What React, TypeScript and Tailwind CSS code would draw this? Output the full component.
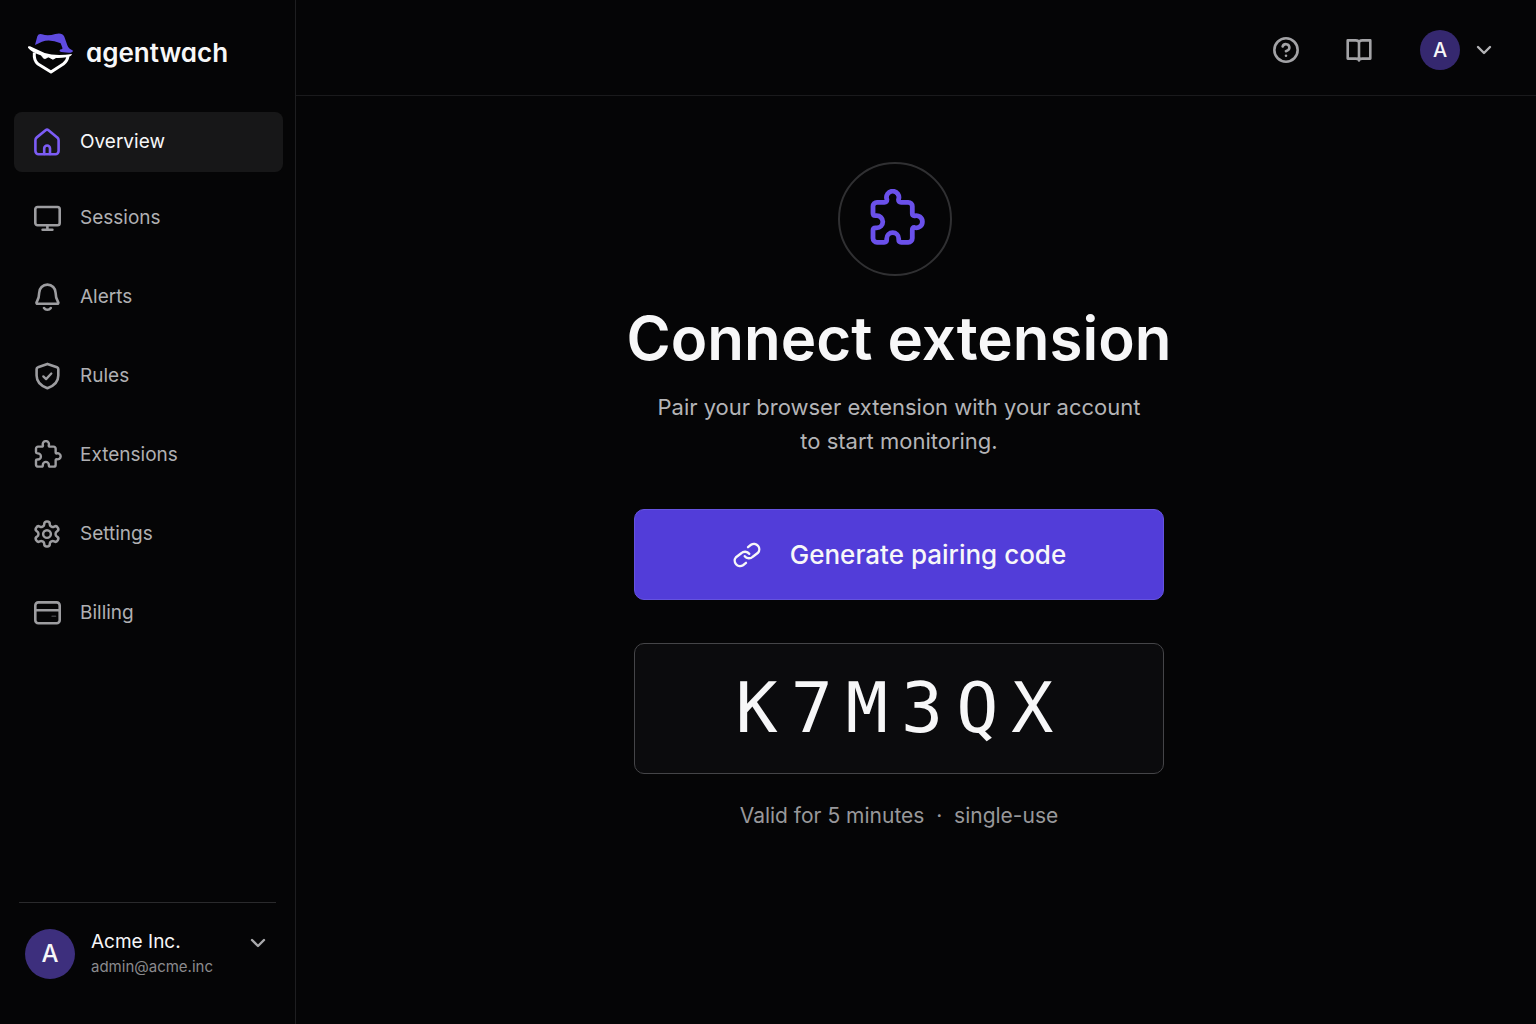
import type { ReactNode } from "react";
import { ChevronDown, CircleQuestionMark } from "lucide-react";

function Stroke({ children }: { children: ReactNode }) {
  return (
    <svg
      className="size-[30px] shrink-0"
      viewBox="0 0 30 30"
      fill="none"
      stroke="currentColor"
      strokeWidth={2.6}
      strokeLinecap="round"
      strokeLinejoin="round"
      aria-hidden="true"
    >
      {children}
    </svg>
  );
}

function PuzzleIcon({ className }: { className?: string }) {
  return (
    <svg
      className={className}
      viewBox="-3 2 60 60"
      fill="none"
      stroke="currentColor"
      strokeWidth={4.8}
      strokeLinecap="round"
      strokeLinejoin="round"
      aria-hidden="true"
    >
      <path d="M9 15.3H16.4Q19 15.3 18.9 12.6A6.2 6.2 0 1 1 30.5 12.6Q30.4 15.3 33 15.3H40.3a4 4 0 0 1 4 4V26.4Q44.3 29 46.4 28.9A6.1 6.1 0 1 1 46.4 40.5Q44.3 40.4 44.3 43V51.3a4 4 0 0 1-4 4H33.2Q30.7 55.3 30.7 52.6V51.7a6 6 0 0 0-12 0V52.6Q18.7 55.3 16.2 55.3H9a4 4 0 0 1-4-4V43.2Q5 40.9 7.6 40.9H8.7a6.1 6.1 0 0 0 0-12.2H7.6Q5 28.7 5 26.2V19.3a4 4 0 0 1 4-4z" />
    </svg>
  );
}

function LinkIcon() {
  return (
    <svg
      className="size-[30px] shrink-0"
      viewBox="0 0 24 24"
      fill="none"
      stroke="currentColor"
      strokeWidth={1.9}
      strokeLinecap="round"
      strokeLinejoin="round"
      aria-hidden="true"
    >
      <path d="M10.2 13a4.3 4.3 0 0 0 6.4.4l4.2-3.2a4.3 4.3 0 0 0-5.6-6.4l-2.4 1.9" />
      <path d="M13.8 11a4.3 4.3 0 0 0-6.4-.4l-4.2 3.2a4.3 4.3 0 0 0 5.6 6.4l2.4-1.9" />
    </svg>
  );
}

function LogoMark() {
  return (
    <svg className="h-[54px] w-[60px]" viewBox="0 0 180 162" aria-hidden="true">
      <path
        d="M39 57 46 31Q50 21 60 25 78 31 100 24 120 18 127 32L136 58Q140 69 153 74 152 80 140 80L118 78Q108 76 116 70 124 70 120 62L116 52Q84 38 60 47 48 53 39 57Z"
        fill="#5f4be0"
      />
      <path d="M18 65Q16 59 24 61L68 81Q100 91 150 84 149 91 134 94 96 99 62 90 28 79 18 65Z" fill="#fff" />
      <path d="M37 80Q35 104 48 114L87 138 124 114Q136 105 138 90" fill="none" stroke="#fff" strokeWidth="9" strokeLinejoin="round" />
      <path d="M58 88 63 95Q68 101 75 95 80 91 84 95 93 104 100 96L108 92Z" fill="#fff" stroke="#fff" strokeWidth="2" />
    </svg>
  );
}

const HOME_ICON = (
  <Stroke>
    <path d="M3.4 13.2a3.6 3.6 0 0 1 1.4-2.8L13.6 3.3a2.3 2.3 0 0 1 2.9 0l8.7 7.1a3.6 3.6 0 0 1 1.4 2.8V24a3.2 3.2 0 0 1-3.2 3.2H6.6A3.2 3.2 0 0 1 3.4 24z" />
    <path d="M12.2 27v-5.6a2.9 2.9 0 0 1 5.8 0V27" />
  </Stroke>
);

const NAV = [
  {
    name: "Sessions",
    icon: (
      <Stroke>
        <rect x="3.3" y="4" width="24.4" height="18.2" rx="2.2" />
        <path d="M15.4 22.4v4.4M10.6 26.8h9.8" />
      </Stroke>
    ),
  },
  {
    name: "Alerts",
    icon: (
      <Stroke>
        <path d="M15.4 2.6a8.2 8.2 0 0 0-8.2 8.2c0 5.2-1.2 7-2.5 9.2-.6 1-.1 1.8 1 1.8h19.4c1.1 0 1.6-.8 1-1.8-1.3-2.2-2.5-4-2.5-9.2a8.2 8.2 0 0 0-8.2-8.2z" />
        <path d="M12 26a4.2 4.2 0 0 0 6.8 0" />
      </Stroke>
    ),
  },
  {
    name: "Rules",
    icon: (
      <Stroke>
        <path d="M15.4 2.9 25 6.2a2 2 0 0 1 1.3 1.9v6.4c0 6-4 10.3-10.9 12.7C8.6 24.8 4.6 20.5 4.6 14.5V8.1A2 2 0 0 1 6 6.2z" />
        <path d="m11.3 15.4 2.8 2.7 5.2-5.6" strokeWidth={2.3} />
      </Stroke>
    ),
  },
  { name: "Extensions", icon: <PuzzleIcon className="size-[30px] shrink-0" /> },
  {
    name: "Settings",
    icon: (
      <svg
        className="size-[30px] shrink-0"
        viewBox="0 0 24 24"
        fill="none"
        stroke="currentColor"
        strokeWidth={2}
        strokeLinecap="round"
        strokeLinejoin="round"
        aria-hidden="true"
      >
        <path d="M12.22 2h-.44a2 2 0 0 0-2 2v.18a2 2 0 0 1-1 1.73l-.43.25a2 2 0 0 1-2 0l-.15-.08a2 2 0 0 0-2.73.73l-.22.38a2 2 0 0 0 .73 2.73l.15.1a2 2 0 0 1 1 1.72v.51a2 2 0 0 1-1 1.74l-.15.09a2 2 0 0 0-.73 2.73l.22.38a2 2 0 0 0 2.73.73l.15-.08a2 2 0 0 1 2 0l.43.25a2 2 0 0 1 1 1.73V20a2 2 0 0 0 2 2h.44a2 2 0 0 0 2-2v-.18a2 2 0 0 1 1-1.73l.43-.25a2 2 0 0 1 2 0l.15.08a2 2 0 0 0 2.73-.73l.22-.39a2 2 0 0 0-.73-2.73l-.15-.08a2 2 0 0 1-1-1.74v-.5a2 2 0 0 1 1-1.74l.15-.09a2 2 0 0 0 .73-2.73l-.22-.38a2 2 0 0 0-2.73-.73l-.15.08a2 2 0 0 1-2 0l-.43-.25a2 2 0 0 1-1-1.73V4a2 2 0 0 0-2-2z" />
        <circle cx="12" cy="12" r="3.1" />
      </svg>
    ),
  },
  {
    name: "Billing",
    icon: (
      <Stroke>
        <rect x="3.3" y="4.4" width="24.4" height="20.8" rx="3" />
        <path d="M3.6 12.2h24" />
        <path d="M20 18.3h3.6" strokeWidth={1.4} stroke="#3f3f42" />
      </Stroke>
    ),
  },
];

function Sidebar() {
  return (
    <aside className="flex w-[296px] shrink-0 flex-col border-r border-[#1e1e20] pt-[26px]">
      <a href="#" className="flex items-center gap-1 pl-[22px]">
        <LogoMark />
        <span className="text-[26px] leading-8 font-semibold [font-feature-settings:'cv11']">agentwach</span>
      </a>

      <nav className="mt-8 flex flex-col gap-4 pr-3 pl-[14px] text-[19px]">
        <a href="#" aria-current="page" className="flex h-[60px] items-center gap-[18px] rounded-lg bg-[#171718] pl-[18px]">
          <span className="text-[#7c5cf5]">{HOME_ICON}</span>
          Overview
        </a>
        <ul className="flex flex-col gap-[19px] text-[#b0b0b3]">
          {NAV.map((item) => (
            <li key={item.name}>
              <a href="#" className="flex h-[60px] items-center gap-[18px] rounded-lg pl-[18px]">
                <span className="text-[#9d9da0]">{item.icon}</span>
                {item.name}
              </a>
            </li>
          ))}
        </ul>
      </nav>

      <div className="mx-[19px] mt-auto border-t border-[#2a2a2c] pt-[26px] pb-[45px]">
        <button type="button" className="flex w-full items-start pl-[6px] text-left">
          <span className="flex size-[50px] items-center justify-center rounded-full bg-[#3d2f7d] text-2xl font-medium">A</span>
          <span className="ml-4 flex-1">
            <span className="block text-[19px] leading-[26px]">Acme Inc.</span>
            <span className="block text-[15px] leading-6 text-[#8b8b8e]">admin@acme.inc</span>
          </span>
          <ChevronDown className="mt-[2px] mr-[6px] size-6 text-[#a9a9ac]" strokeWidth={2.4} />
        </button>
      </div>
    </aside>
  );
}

function Topbar() {
  return (
    <header className="flex h-24 items-center justify-end border-b border-[#1a1a1c] pr-10 pb-[2px] pt-[6px]">
      <button type="button" aria-label="Help" className="text-[#a3a3a6]">
        <CircleQuestionMark className="size-7" strokeWidth={2.2} />
      </button>
      <button type="button" aria-label="Documentation" className="ml-11 text-[#a3a3a6]">
        <Stroke>
          <path d="M3.7 5.4H11.6Q15 5.4 15 7.8 15 5.4 18.4 5.4H26.3V23.6H18.4Q15 23.6 15 25.4 15 23.6 11.6 23.6H3.7ZM15 7.8V24.6" />
        </Stroke>
      </button>
      <button type="button" aria-label="Account" className="ml-[46px] flex items-center gap-3">
        <span className="flex size-10 items-center justify-center rounded-full bg-[#35286f] text-xl font-medium">A</span>
        <ChevronDown className="size-6 text-[#b4b4b7]" strokeWidth={2.4} />
      </button>
    </header>
  );
}

export default function App() {
  return (
    <div className="flex min-h-screen bg-[#050506] font-['Inter',sans-serif] text-[#f7f7f8]">
      <Sidebar />
      <div className="flex min-w-0 flex-1 flex-col">
        <Topbar />
        <main className="flex flex-col items-center pt-[66px] pr-[34px] text-center">
          <div className="mr-2 flex size-[114px] items-center justify-center rounded-full border-2 border-[#303032]">
            <PuzzleIcon className="size-[60px] text-[#6a50ea]" />
          </div>
          <h1 className="mt-[30px] text-[60px] leading-[64px] font-semibold">Connect extension</h1>
          <p className="mt-5 text-[22px] leading-[34px] text-[#b4b4b7]">
            Pair your browser extension with your account
            <br />
            to start monitoring.
          </p>
          <button
            type="button"
            className="mt-[51px] flex h-[91px] w-full max-w-[530px] items-center justify-center gap-7 rounded-[10px] border border-[#6553df] bg-[#523dd9] text-[26px] font-medium"
          >
            <LinkIcon />
            Generate pairing code
          </button>
          <output className="mt-[43px] flex h-[131px] w-full max-w-[530px] items-center justify-center rounded-[10px] border border-[#454548] bg-[#0b0b0d] pl-1 font-['DejaVu_Sans_Mono',monospace] text-[70px] tracking-[13px]">
            K7M3QX
          </output>
          <p className="mt-[25px] text-[21px] leading-[34px] text-[#98989b]">Valid for 5 minutes&nbsp; · &nbsp;single-use</p>
        </main>
      </div>
    </div>
  );
}
